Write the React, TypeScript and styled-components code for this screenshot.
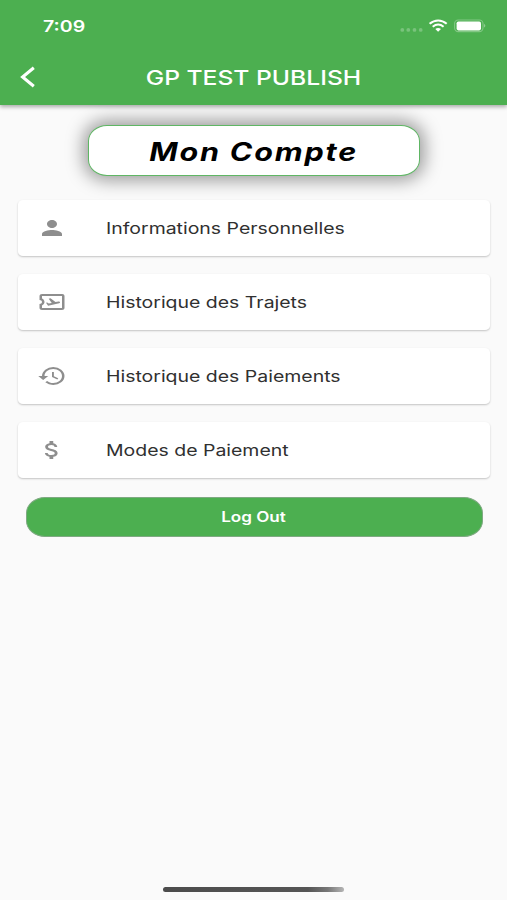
import React from 'react';
import styled, { createGlobalStyle } from 'styled-components';
import {
  MdPerson,
  MdOutlineAirplaneTicket,
  MdHistory,
  MdAttachMoney,
} from 'react-icons/md';
import type { IconType } from 'react-icons';

const GlobalStyle = createGlobalStyle`
  *, *::before, *::after { box-sizing: border-box; }
  body {
    margin: 0;
    background: #fafafa;
    font-family: Inter, "Liberation Sans", sans-serif;
  }
`;

const Screen = styled.div`
  width: 507px;
  height: 900px;
  display: flex;
  flex-direction: column;
  background: #fafafa;
  overflow: hidden;
`;

const Header = styled.header`
  height: 105px;
  flex: none;
  z-index: 1;
  background: #4caf50;
  color: #fff;
  box-shadow: 0 2px 4px rgba(0, 0, 0, 0.32);
`;

const StatusBar = styled.div`
  height: 50px;
  padding: 1px 21px 0 42.5px;
  display: flex;
  align-items: center;
  justify-content: space-between;
`;

const Wide = styled.span<{ $scale?: number; $origin?: string }>`
  display: inline-block;
  white-space: nowrap;
  transform: scaleX(${(p) => p.$scale ?? 1.22});
  transform-origin: ${(p) => p.$origin ?? 'left'} center;
`;

const Clock = styled.span`
  font-size: 16px;
  font-weight: 600;
  line-height: 20px;
`;

const Toolbar = styled.div`
  height: 55px;
  padding: 0 20px;
  display: grid;
  grid-template-columns: 40px 1fr 40px;
  align-items: center;
`;

const BackButton = styled.button`
  display: flex;
  padding: 0 0 1px;
  border: 0;
  background: none;
  color: inherit;
`;

const Title = styled.h1`
  margin: 0;
  text-align: center;
  font-size: 20px;
  font-weight: 500;
  line-height: 24px;
`;

const Content = styled.main`
  flex: 1;
  padding: 20px 17px 0 18px;
  display: flex;
  flex-direction: column;
`;

const AccountBadge = styled.div`
  width: 332px;
  height: 51px;
  margin: 0 0 23.6px 70px;
  padding: 2px 0 0 0;
  display: flex;
  align-items: center;
  justify-content: center;
  border: 1px solid #5fb664;
  border-radius: 19px / 16px;
  background: #fff;
  box-shadow: 0 0 18px 4px rgba(0, 0, 0, 0.4);
  color: #000;
  font-size: 25px;
  font-weight: 700;
  font-style: italic;
  letter-spacing: 1.5px;
  line-height: 30px;
`;

const Menu = styled.nav`
  display: flex;
  flex-direction: column;
  gap: 18.2px;
`;

const MenuRow = styled.a`
  height: 56px;
  padding-left: 19px;
  display: flex;
  align-items: center;
  border-radius: 5px / 4px;
  background: #fff;
  box-shadow: 0 1px 2px rgba(0, 0, 0, 0.22);
  color: #303030;
  font-size: 16px;
  line-height: 20px;
`;

const RowIcon = styled.span`
  width: 69px;
  display: flex;
  color: #8e8e8e;

  svg {
    width: 30px;
    height: 24px;
  }
`;

const LogOut = styled.button`
  height: 40px;
  margin: 18.5px 7.5px 0;
  padding: 0 2px 0 0;
  border: 1px solid #7fa982;
  border-radius: 19px / 16px;
  background: #4caf50;
  color: #fff;
  font: 600 14px/18px Inter, sans-serif;
`;

const HomeArea = styled.footer`
  height: 13px;
  display: flex;
  justify-content: center;
`;

const HomeIndicator = styled.div`
  width: 181px;
  height: 5px;
  border-radius: 3px;
  background: linear-gradient(90deg, #4c4c4c 0%, #555 80%, #777 91%, #b5b5b5 100%);
`;

const StatusIcons = () => (
  <svg width="86" height="16" viewBox="0 0 86 16">
    <g fill="#fff" fillOpacity="0.25">
      <circle cx="2.3" cy="11.9" r="1.9" />
      <circle cx="8.3" cy="11.9" r="1.9" />
      <circle cx="14.5" cy="11.9" r="1.9" />
      <circle cx="20.7" cy="11.9" r="1.9" />
    </g>
    <g fill="none" stroke="#fff" strokeWidth="2.1">
      <path d="M29.6 5.8C34.8 1.4 41.5 1.4 46.7 5.8" />
      <path d="M32.7 8.7C36.1 6 40.2 6 43.6 8.7" />
    </g>
    <path d="M35.3 10.9Q38.1 9 41 10.9L38.1 13.7Z" fill="#fff" />
    <rect x="54.6" y="2" width="28.4" height="11.6" rx="3.6" fill="none" stroke="#fff" strokeOpacity="0.3" strokeWidth="1.1" />
    <rect x="56.6" y="3.5" width="24.4" height="8.9" rx="1.8" fill="#fff" />
    <path d="M84.2 5.8Q86.4 7.6 84.2 9.6Z" fill="#fff" fillOpacity="0.45" />
  </svg>
);

const items: { label: string; icon: IconType }[] = [
  { label: 'Informations Personnelles', icon: MdPerson },
  { label: 'Historique des Trajets', icon: MdOutlineAirplaneTicket },
  { label: 'Historique des Paiements', icon: MdHistory },
  { label: 'Modes de Paiement', icon: MdAttachMoney },
];

export default function App() {
  return (
    <>
      <GlobalStyle />
      <Screen>
        <Header>
          <StatusBar>
            <Clock><Wide>7:09</Wide></Clock>
            <StatusIcons />
          </StatusBar>
          <Toolbar>
            <BackButton aria-label="Retour">
              <svg width="16" height="22" viewBox="0 0 16 22">
                <path d="M13.8 1.8L2.6 11L13.8 20.2" fill="none" stroke="#fff" strokeWidth="3.1" />
              </svg>
            </BackButton>
            <Title><Wide $origin="center" $scale={1.232}>GP TEST PUBLISH</Wide></Title>
          </Toolbar>
        </Header>
        <Content>
          <AccountBadge><Wide $origin="center">Mon Compte</Wide></AccountBadge>
          <Menu>
            {items.map(({ label, icon: Icon }) => (
              <MenuRow key={label}>
                <RowIcon>
                  <Icon preserveAspectRatio="none" />
                </RowIcon>
                <Wide $scale={1.216}>{label}</Wide>
              </MenuRow>
            ))}
          </Menu>
          <LogOut><Wide $origin="center">Log Out</Wide></LogOut>
        </Content>
        <HomeArea><HomeIndicator /></HomeArea>
      </Screen>
    </>
  );
}
